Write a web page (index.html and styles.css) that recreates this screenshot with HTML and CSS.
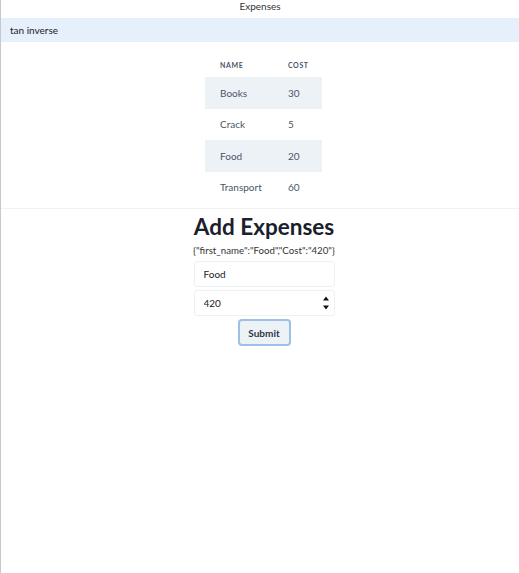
FILE: index.html
```html
<!DOCTYPE html>
<html>
<head>
<meta charset="utf-8">
<link rel="stylesheet" href="styles.css">
</head>
<body>
<div class="page">
  <div class="title">Expenses</div>
  <div class="navbar">tan inverse</div>
  <div class="table-wrap">
    <table class="expenses">
      <thead>
        <tr><th class="c1">Name</th><th class="c2">Cost</th></tr>
      </thead>
      <tbody>
        <tr class="alt"><td>Books</td><td>30</td></tr>
        <tr><td>Crack</td><td>5</td></tr>
        <tr class="alt"><td>Food</td><td>20</td></tr>
        <tr><td>Transport</td><td>60</td></tr>
      </tbody>
    </table>
  </div>
  <div class="divider"></div>
  <div class="form">
    <h1 class="heading">Add Expenses</h1>
    <div class="json">{"first_name":"Food","Cost":"420"}</div>
    <input class="field" type="text" value="Food">
    <div class="num-wrap">
      <input class="field num" type="number" value="420">
      <span class="spin">
        <svg width="8" height="18" viewBox="0 0 8 18"><path d="M4 2.5 L7 6.5 L1 6.5 Z" fill="#111"/><path d="M1 11.5 L7 11.5 L4 15.5 Z" fill="#111"/></svg>
      </span>
    </div>
    <button class="submit">Submit</button>
  </div>
</div>
</body>
</html>
```
FILE: styles.css
```css
html, body {
  margin: 0;
  padding: 0;
  background: #fff;
}
body {
  font-family: Lato, "Noto Sans", sans-serif;
  color: #1f2328;
}
.page {
  min-height: 573px;
  border-left: 1px solid #c8c8c8;
  box-sizing: border-box;
}
.title {
  height: 18px;
  line-height: 13px;
  text-align: center;
  font-size: 10px;
  color: #333;
}
.navbar {
  height: 24px;
  line-height: 25px;
  background: #e6effc;
  padding-left: 9px;
  font-size: 10px;
  color: #222;
}
.table-wrap {
  display: flex;
  justify-content: center;
  padding-top: 10px;
  padding-left: 7px;
}
.expenses {
  border-collapse: collapse;
  width: 117px;
  font-size: 10px;
  color: #4a5568;
}
.expenses th {
  height: 25px;
  text-align: left;
  font-size: 7px;
  font-weight: 700;
  letter-spacing: 0.6px;
  text-transform: uppercase;
  color: #4a5568;
  padding: 0 0 0 15px;
}
.expenses th.c1 { width: 53px; }
.expenses td {
  height: 31.5px;
  padding: 0 0 0 15px;
}
.expenses tr.alt td {
  background: #edf2f7;
}
.divider {
  height: 1px;
  background: #f1f1f1;
  margin-top: 5px;
}
.form {
  display: flex;
  flex-direction: column;
  align-items: center;
  padding-left: 8px;
}
.heading {
  margin: 4px 0 0 0;
  font-size: 22.5px;
  line-height: 28px;
  font-weight: 700;
  color: #1a202c;
}
.json {
  font-size: 9.7px;
  line-height: 12px;
  margin-top: 3px;
  color: #333;
}
.field {
  box-sizing: border-box;
  width: 141px;
  height: 26px;
  border: 1px solid #eef0f3;
  border-radius: 3px;
  padding: 0 9px;
  font-family: Lato, "Noto Sans", sans-serif;
  font-size: 10px;
  color: #222;
  outline: none;
  background: #fff;
}
.form > .field {
  margin-top: 5px;
}
.num-wrap {
  position: relative;
  margin-top: 3px;
  width: 141px;
  height: 26px;
}
.num {
  -moz-appearance: textfield;
}
.num::-webkit-outer-spin-button,
.num::-webkit-inner-spin-button {
  -webkit-appearance: none;
  margin: 0;
}
.spin {
  position: absolute;
  right: 5px;
  top: 4px;
  display: block;
  line-height: 0;
}
.submit {
  margin-top: 3px;
  box-sizing: border-box;
  width: 53px;
  height: 27px;
  border: 2px solid #9cc0e6;
  border-radius: 4px;
  background: #edf2f7;
  font-family: Lato, "Noto Sans", sans-serif;
  font-size: 10px;
  font-weight: 700;
  color: #2d3748;
  padding: 0;
}
```
